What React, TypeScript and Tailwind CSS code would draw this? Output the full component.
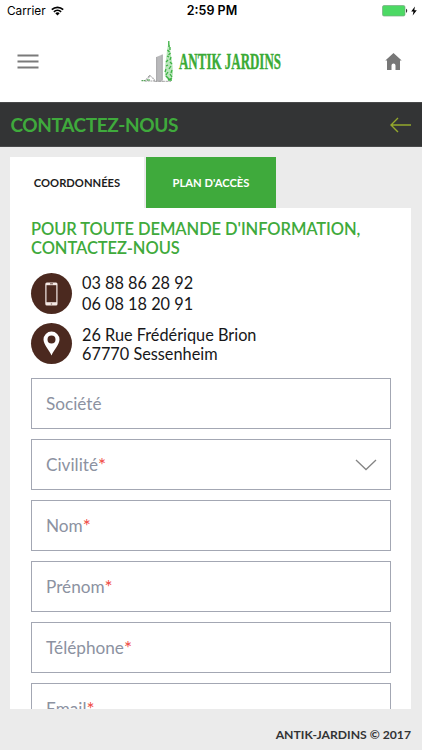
import React from "react";

const fields = [
  { label: "Société", required: false },
  { label: "Civilité", required: true, select: true },
  { label: "Nom", required: true },
  { label: "Prénom", required: true },
  { label: "Téléphone", required: true },
  { label: "Email", required: true },
];

function StatusBar() {
  return (
    <div className="flex h-[22px] shrink-0 items-center justify-between pl-[7px] pr-[5px] font-['Inter','Roboto',sans-serif] text-black">
      <div className="flex w-[120px] items-center gap-[5px]">
        <span className="text-[11.8px] leading-[22px]">Carrier</span>
        <svg width="13" height="10" viewBox="0 0 13 10" fill="none" stroke="#000" strokeWidth="1.7">
          <path d="M.8 3.6a8.2 8.2 0 0 1 11.4 0" />
          <path d="M2.9 5.8a5.2 5.2 0 0 1 7.2 0" />
          <path d="M6.5 9.6 4.3 7.3a3.2 3.2 0 0 1 4.4 0Z" fill="#000" stroke="none" />
        </svg>
      </div>
      <span className="text-[12.5px] font-semibold leading-[22px]">2:59 PM</span>
      <div className="flex w-[120px] items-center justify-end gap-[3px]">
        <svg width="26" height="12" viewBox="0 0 26 12">
          <rect x=".5" y=".5" width="22.5" height="10.5" rx="1.5" fill="#4cd964" stroke="#79a982" strokeWidth=".7" />
          <path d="M24 3.8c1.6.4 1.6 3.5 0 3.9Z" fill="#333" />
        </svg>
        <svg width="6" height="10" viewBox="0 0 6 10">
          <path d="M3.9.4.2 5.5h2.3L1.7 9.5 5.8 4.2H3.3Z" fill="#000" />
        </svg>
      </div>
    </div>
  );
}

function Logo() {
  return (
    <svg width="150" height="44" viewBox="140 40 150 44" className="block">
      <path d="M156.3 57 162.5 54.5V81.5H156.3Z" fill="#b9b9bb" />
      <path d="M156.6 57V81.5M162.3 54.5V80" stroke="#99999c" strokeWidth=".7" />
      <path d="M154.5 81.3H171" stroke="#8c8c8c" strokeWidth=".8" strokeDasharray="3 .7" />
      <path
        d="M168.8 41.5 167.8 46 167 50 166.5 56 165.5 62 165 70 164.8 76 168 80 172 79 173 73 172.5 65 171.5 58 170.5 52 169.8 46Z"
        fill="#b9e6bb"
      />
      <path
        d="M168.8 41v4M168 46h2M170 47v3M167.5 50l2 2M170.5 53l-2 2M167 56l2 1M171 57l-1 3M168 60l-2 2M170 62l2 2M168 65l-2 1M171 66l-2 3M166 69l-1 3M172 70l-1 3M168 72l-2 3M170 74l2 3M166 76l3 3M168 80l4-2M172 80h-4"
        fill="none"
        stroke="#3cb043"
        strokeWidth="1.3"
      />
      <path d="M146 80q1-3 3-2l1-3 2 3q3 0 2 3M148 77l2-2M145 81h10" fill="none" stroke="#8b8b8d" strokeWidth=".8" strokeDasharray="2 .7" />
      <path d="M141.5 80.7h4.5M147 80h3" stroke="#59a35b" strokeWidth="1.3" strokeDasharray="1.7 .5" />
      <text
        x="179"
        y="69.3"
        textLength="102"
        lengthAdjust="spacingAndGlyphs"
        fill="#3aaa35"
        stroke="#3aaa35"
        strokeWidth=".4"
        className="font-['Liberation_Serif',serif] text-[24px] font-bold"
      >
        ANTIK JARDINS
      </text>
    </svg>
  );
}

function Header() {
  return (
    <header className="flex h-20 shrink-0 items-start pl-[17px] pr-5 pt-[18px]">
      <svg width="22" height="44" viewBox="0 0 22 44" stroke="#7a7a7a" strokeWidth="2.2">
        <path d="M.5 15.5h21M.5 21.5h21M.5 27.5h21" />
      </svg>
      <div className="ml-[101px]">
        <Logo />
      </div>
      <svg className="ml-auto" width="17" height="44" viewBox="0 0 17 44">
        <path d="M8.5 13 .3 20.6H2V30h4.5v-4.5a2 2 0 0 1 4 0V30H15v-9.4h1.7Z" fill="#777" />
      </svg>
    </header>
  );
}

function ContactIcon({ children }: { children: React.ReactNode }) {
  return (
    <div className="flex size-[41px] shrink-0 items-center justify-center rounded-full bg-[#4b291f]">{children}</div>
  );
}

export default function App() {
  return (
    <div className="flex h-[750px] w-[422px] flex-col overflow-hidden bg-white font-['Lato',sans-serif]">
      <StatusBar />
      <Header />
      <div className="flex h-[45px] shrink-0 items-center justify-between border-y border-[#48494a] bg-[#333435] pl-[10.5px] pr-[10px]">
        <h1 className="text-[19px] font-bold leading-6 tracking-[-0.4px] text-[#3faa3c]">CONTACTEZ-NOUS</h1>
        <svg width="22" height="16" viewBox="0 0 22 16" fill="none" stroke="#94a82d" strokeWidth="1.4">
          <path d="M1 8h20M8 1 1 8l7 7" />
        </svg>
      </div>
      <div className="flex min-h-0 flex-1 flex-col bg-[#ebebeb] pl-[10px] pr-[11px] pt-[10px]">
        <div className="flex h-[51px] shrink-0 gap-[2px] text-[11.2px] font-bold">
          <div className="flex w-[134px] items-center justify-center bg-white pt-[1px] text-[#1d1d1d]">COORDONNÉES</div>
          <div className="flex w-[130px] items-center justify-center bg-[#3faa3c] pt-[1px] text-white">PLAN D'ACCÈS</div>
        </div>
        <main className="h-[501px] shrink-0 overflow-hidden bg-white pl-[21px] pr-[20px] pt-[12px]">
          <h2 className="whitespace-nowrap text-[16.5px] font-semibold leading-[19px] tracking-[-0.08px] text-[#3faa3c]">
            POUR TOUTE DEMANDE D'INFORMATION,
            <br />
            CONTACTEZ-NOUS
          </h2>
          <div className="mt-[15px] flex gap-[10px]">
            <ContactIcon>
              <svg width="13" height="24" viewBox="0 0 13 24" fill="none">
                <rect x=".3" y=".5" width="12.2" height="23" rx="1.5" fill="#f5e9e5" />
                <rect x="1.5" y="3.2" width="9.8" height="17" fill="#4b291f" />
                <path d="M5 1.8h3M5.8 22h1.3" stroke="#4b291f" strokeWidth=".8" />
              </svg>
            </ContactIcon>
            <p className="-mt-px text-[16.3px] leading-[21px] text-[#171719]">
              03 88 86 28 92
              <br />
              06 08 18 20 91
            </p>
          </div>
          <div className="mt-[9px] flex gap-[10px]">
            <ContactIcon>
              <svg width="17" height="25" viewBox="0 0 17 25">
                <path
                  d="M8.5.5A8 8 0 0 0 .5 8.6C.5 13.5 6 19 8.5 24.5 11 19 16.5 13.5 16.5 8.6A8 8 0 0 0 8.5.5Zm0 4.1a4 4 0 1 1 0 8 4 4 0 0 1 0-8Z"
                  fill="#fff"
                  fillRule="evenodd"
                />
              </svg>
            </ContactIcon>
            <p className="pt-[2px] text-[16.3px] leading-[19px] text-[#171719]">
              26 Rue Frédérique Brion
              <br />
              67770 Sessenheim
            </p>
          </div>
          <form className="mt-[14px] flex flex-col gap-[10px]">
            {fields.map((field) => (
              <label
                key={field.label}
                className="flex h-[51px] shrink-0 items-center border border-[#a3a7b3] pl-[14px] pr-[13px] text-[17.2px] text-[#8c92a1]"
              >
                <span>{field.label}</span>
                {field.required && <span className="text-[19px] leading-5 text-[#f04a43]">*</span>}
                {field.select && (
                  <svg className="ml-auto" width="22" height="12" viewBox="0 0 22 12" fill="none" stroke="#858585" strokeWidth="1.3">
                    <path d="M1 1l10 9.5L21 1" />
                  </svg>
                )}
              </label>
            ))}
          </form>
        </main>
        <footer className="flex flex-1 items-center justify-end pt-[11px] text-[12.2px] font-bold text-[#333435]">
          ANTIK-JARDINS © 2017
        </footer>
      </div>
    </div>
  );
}
